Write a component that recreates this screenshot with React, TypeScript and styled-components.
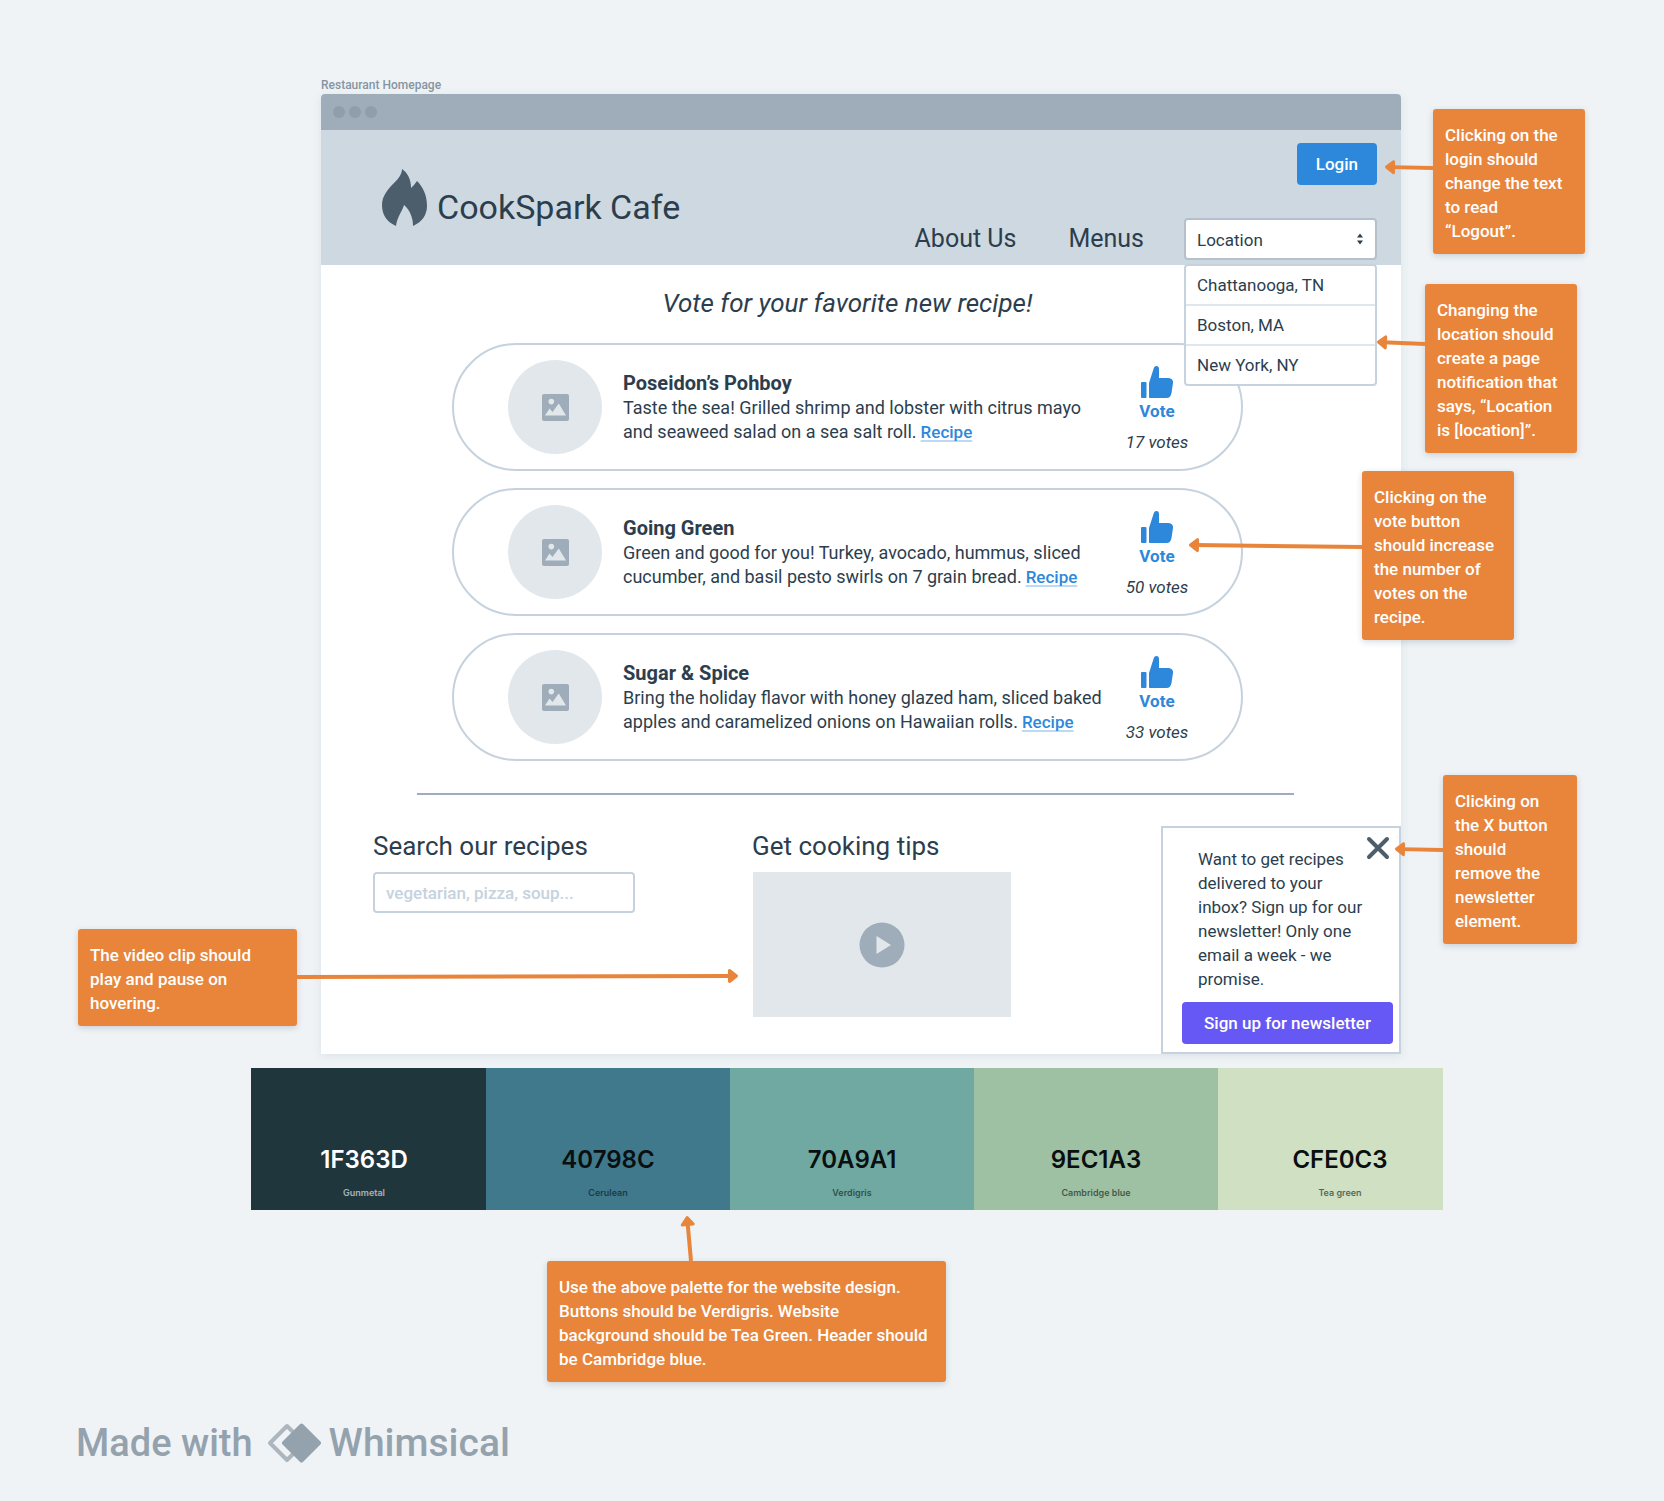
import React, { useState } from "react";
import styled, { createGlobalStyle, css } from "styled-components";

const ink = "#2c3e4d";
const slate = "#4c5d6b";
const steel = "#9eadb9";
const line = "#c6d2dd";
const blue = "#2d88db";
const orange = "#e8853b";

const GlobalStyle = createGlobalStyle`
  *, *::before, *::after { box-sizing: border-box; }
  body {
    margin: 0;
    background: #eff3f6;
    color: ${ink};
    font-family: Roboto, "Open Sans", sans-serif;
    font-size: 17px;
    line-height: 24px;
  }
  h1, h2, h3, p, ul { margin: 0; padding: 0; }
  ul { list-style: none; }
  button, input, select { font: inherit; color: inherit; }
  button { cursor: pointer; }
`;

const Board = styled.div`
  min-height: 100vh;
  padding: 77px 0 34px;
  overflow: hidden;
`;

const FrameArea = styled.div`
  margin: 0 263px 0 321px;
`;

const FrameLabel = styled.div`
  height: 17px;
  font-size: 12px;
  line-height: 17px;
  font-weight: 500;
  color: #8595a2;
`;

const Frame = styled.main`
  position: relative;
  background: #fff;
  border-radius: 4px 4px 0 0;
  box-shadow: 0 2px 10px rgba(60, 85, 110, 0.1);
`;

const TitleBar = styled.div`
  display: flex;
  align-items: center;
  gap: 4px;
  height: 36px;
  padding: 0 12px;
  background: ${steel};
  border-radius: 4px 4px 0 0;
`;

const Dot = styled.span`
  width: 12px;
  height: 12px;
  border-radius: 50%;
  background: #8e9eac;
`;

const Header = styled.header`
  display: flex;
  justify-content: space-between;
  height: 135px;
  padding: 13px 24px 5px 61px;
  background: #cdd8e1;
`;

const Brand = styled.div`
  display: flex;
  align-items: flex-start;
  gap: 10px;
  padding-top: 26px;
`;

const BrandName = styled.h1`
  padding-top: 18px;
  font-size: 34px;
  line-height: 40px;
  font-weight: 400;
`;

const HeaderSide = styled.div`
  display: flex;
  flex-direction: column;
  align-items: flex-end;
  justify-content: space-between;
`;

const SolidButton = styled.button<{ $fill: string }>`
  height: 42px;
  padding: 0 19px;
  border: 0;
  border-radius: 4px;
  background: ${(p) => p.$fill};
  color: #fff;
  font-weight: 500;
`;

const Nav = styled.nav`
  display: flex;
  align-items: center;
  gap: 40px;
`;

const NavLinks = styled.div`
  display: flex;
  gap: 52px;
`;

const NavLink = styled.a`
  font-size: 25px;
  line-height: 32px;
  color: inherit;
  text-decoration: none;
`;

const Picker = styled.div`
  position: relative;
  width: 193px;
`;

const PickerSelect = styled.select`
  display: block;
  width: 100%;
  height: 42px;
  padding: 2px 11px 0;
  appearance: none;
  background: #fff;
  border: 2px solid #b4c1cd;
  border-radius: 4px;
`;

const PickerArrows = styled.svg`
  position: absolute;
  top: 15px;
  right: 13px;
  pointer-events: none;
`;

const PickerMenu = styled.ul`
  position: absolute;
  z-index: 2;
  top: calc(100% + 4px);
  left: 0;
  right: 0;
  background: #fff;
  border: 2px solid ${line};
  border-radius: 4px;
`;

const PickerItem = styled.li`
  & + & { border-top: 2px solid #dfe6ee; }
`;

const PickerOption = styled.button`
  display: block;
  width: 100%;
  height: 38px;
  padding: 0 11px;
  border: 0;
  background: none;
  text-align: left;
`;

const Voting = styled.section`
  padding: 22px 158px 0 131px;
`;

const VotingTitle = styled.h2`
  margin-bottom: 24px;
  text-align: center;
  font-size: 26px;
  line-height: 32px;
  font-weight: 400;
  font-style: italic;
`;

const CardList = styled.ul`
  display: grid;
  gap: 17px;
`;

const Card = styled.li`
  display: flex;
  align-items: center;
  height: 128px;
  padding: 0 44px 0 54px;
  border: 2px solid ${line};
  border-radius: 64px;
`;

const Thumb = styled.div`
  display: grid;
  place-items: center;
  flex: none;
  width: 94px;
  height: 94px;
  margin-right: 21px;
  border-radius: 50%;
  background: #e2e7eb;
`;

const CardText = styled.div`
  flex: 1;
`;

const CardTitle = styled.h3`
  font-size: 20px;
  line-height: 26px;
  font-weight: 700;
`;

const CardLine = styled.span`
  display: flex;
  align-items: baseline;
  gap: 4px;
  font-size: 18px;
`;

const RecipeLink = styled.a`
  color: ${blue};
  font-size: 17px;
  font-weight: 500;
  text-decoration: underline;
  text-decoration-color: #bcdaf4;
  text-decoration-thickness: 2px;
  text-underline-offset: 2px;
  text-decoration-skip-ink: none;
`;

const VoteColumn = styled.div`
  display: flex;
  flex-direction: column;
  align-items: center;
  gap: 7px;
  width: 80px;
  padding-top: 6px;
`;

const VoteButton = styled.button`
  display: grid;
  justify-items: center;
  gap: 1px;
  padding: 0;
  border: 0;
  background: none;
  color: ${blue};
  font-weight: 700;
`;

const VoteCount = styled.span`
  font-style: italic;
`;

const Divider = styled.hr`
  height: 2px;
  margin: 32px 107px 0 96px;
  border: 0;
  background: ${steel};
`;

const Extras = styled.div`
  display: grid;
  grid-template-columns: 379fr 409fr 240px;
  padding: 31px 0 0 52px;
`;

const ExtraTitle = styled.h2`
  display: block;
  padding: 4px 0 10px;
  font-size: 26px;
  line-height: 32px;
  font-weight: 400;
`;

const SearchInput = styled.input`
  display: block;
  width: 262px;
  height: 41px;
  padding: 0 11px;
  background: #fff;
  border: 2px solid ${line};
  border-radius: 4px;
  &::placeholder { color: ${line}; opacity: 1; font-weight: 500; }
`;

const Video = styled.div`
  display: grid;
  place-items: center;
  width: 258px;
  height: 145px;
  margin-left: 1px;
  background: #e2e7eb;
`;

const PlayButton = styled.button`
  display: block;
  width: 46px;
  height: 46px;
  padding: 0;
  border: 0;
  background: none;
`;

const Newsletter = styled.aside`
  position: relative;
  display: flex;
  flex-direction: column;
  gap: 11px;
  padding: 19px 6px 8px 19px;
  border: 2px solid ${line};
  background: #fff;
`;

const NewsletterText = styled.p`
  padding-left: 16px;
  white-space: pre-line;
`;

const CloseButton = styled.button`
  position: absolute;
  top: 8px;
  right: 9px;
  width: 24px;
  height: 24px;
  padding: 0;
  border: 0;
  background: none;
`;

const PaletteArea = styled.section`
  margin: 14px 221px 0 251px;
`;

const Palette = styled.div`
  overflow: hidden;
`;

const Swatches = styled.ul`
  display: grid;
  grid-template-columns: repeat(5, 1fr);
  margin: 0 -19px 0 -9px;
`;

const Swatch = styled.li<{ $fill: string; $light?: boolean }>`
  display: flex;
  flex-direction: column;
  align-items: center;
  height: 142px;
  padding-top: 78px;
  background: ${(p) => p.$fill};
  color: ${(p) => (p.$light ? "#fff" : "#0a0f10")};
  font-family: Inter, sans-serif;
`;

const SwatchCode = styled.span`
  font-size: 24px;
  line-height: 28px;
  font-weight: 600;
`;

const SwatchName = styled.span`
  margin-top: 13px;
  font-size: 9px;
  line-height: 12px;
  font-weight: 600;
  opacity: 0.6;
`;

const noteBox = css`
  padding: 14px 10px 11px 12px;
  border-radius: 3px;
  background: ${orange};
  box-shadow: 0 2px 6px rgba(50, 70, 95, 0.2);
  color: #fff;
  font-weight: 500;
  white-space: pre-line;
`;

const PinnedNote = styled.div<{ $top: number; $x: string; $width: number }>`
  ${noteBox}
  position: absolute;
  z-index: 3;
  top: ${(p) => p.$top}px;
  left: ${(p) => p.$x};
  width: ${(p) => p.$width}px;
`;

const PaletteNote = styled.div`
  ${noteBox}
  position: relative;
  width: 399px;
  margin: 51px 0 0 296px;
`;

const ArrowSvg = styled.svg<{ $x: number; $y: number }>`
  position: absolute;
  left: ${(p) => p.$x}px;
  top: ${(p) => p.$y}px;
  overflow: visible;
  pointer-events: none;
`;

const Footer = styled.footer`
  display: flex;
  align-items: center;
  height: 48px;
  margin: 37px 0 0 76px;
  color: #94a2ad;
  font-size: 38px;
  line-height: 48px;
  font-weight: 500;
`;

const FooterLogo = styled.svg`
  margin: 0 8px 0 14px;
`;

const Wordmark = styled.span`
  font-size: 39px;
`;

/* An arrow from (x1, y1) to its tip (x2, y2), measured from the note's corner. */
function Arrow({ x1, y1, x2, y2 }: { x1: number; y1: number; x2: number; y2: number }) {
  const left = Math.min(x1, x2);
  const top = Math.min(y1, y2);
  const angle = (Math.atan2(y2 - y1, x2 - x1) * 180) / Math.PI;
  const w = Math.max(Math.abs(x2 - x1), 1);
  const h = Math.max(Math.abs(y2 - y1), 1);
  const back = 6 / Math.hypot(x2 - x1, y2 - y1);
  return (
    <ArrowSvg $x={left} $y={top} width={w} height={h} aria-hidden="true">
      <line
        x1={x1 - left}
        y1={y1 - top}
        x2={x2 - left - (x2 - x1) * back}
        y2={y2 - top - (y2 - y1) * back}
        stroke={orange}
        strokeWidth="4"
      />
      <path
        d="M-1.5 0L-8.5 -5.5V5.5Z"
        fill={orange}
        stroke={orange}
        strokeWidth="3"
        strokeLinejoin="round"
        transform={`translate(${x2 - left} ${y2 - top}) rotate(${angle})`}
      />
    </ArrowSvg>
  );
}

const Flame = () => (
  <svg width="45" height="57" viewBox="0 0 45 57" aria-hidden="true">
    <path
      fill={slate}
      d="M20 0C26 4 29 11 29 19C31 17 33 15 35 12C41 18 45 26 45 37C45 46 40 53 31 57C31 49 28 41 22 36C20 43 15 48 14 57C5 53 0 46 0 36C0 27 6 20 12 14C17 9 20 5 20 0Z"
    />
  </svg>
);

const PictureIcon = () => (
  <svg width="27" height="27" viewBox="0 0 27 27" aria-hidden="true">
    <rect width="27" height="27" rx="2" fill={steel} />
    <circle cx="9.3" cy="7.6" r="2.8" fill="#e2e7eb" />
    <path d="M3 21.500L7.500 14.500L10.500 18L16.800 9.500L24 21.500Z" fill="#e2e7eb" />
  </svg>
);

const ThumbUp = () => (
  <svg width="32" height="32" viewBox="0 0 32 32" aria-hidden="true">
    <rect x="0" y="16" width="5.500" height="16" rx="1" fill={blue} />
    <path
      fill={blue}
      d="M8 17L12.500 3C13 1 14 0 15.400 0C17 0 18 1.200 18 3V12H27C30.500 12 32.400 14 32 17L30.500 27C30 30 28.500 32 25.500 32H9C8.400 32 8 31.600 8 31Z"
    />
  </svg>
);

interface Recipe {
  title: string;
  first: string;
  second: string;
  votes: number;
}

const recipes: Recipe[] = [
  {
    title: "Poseidon’s Pohboy",
    first: "Taste the sea! Grilled shrimp and lobster with citrus mayo",
    second: "and seaweed salad on a sea salt roll.",
    votes: 17,
  },
  {
    title: "Going Green",
    first: "Green and good for you! Turkey, avocado, hummus, sliced",
    second: "cucumber, and basil pesto swirls on 7 grain bread.",
    votes: 50,
  },
  {
    title: "Sugar & Spice",
    first: "Bring the holiday flavor with honey glazed ham, sliced baked",
    second: "apples and caramelized onions on Hawaiian rolls.",
    votes: 33,
  },
];

const swatches = [
  { code: "1F363D", name: "Gunmetal", light: true },
  { code: "40798C", name: "Cerulean" },
  { code: "70A9A1", name: "Verdigris" },
  { code: "9EC1A3", name: "Cambridge blue" },
  { code: "CFE0C3", name: "Tea green" },
];

const places = ["Chattanooga, TN", "Boston, MA", "New York, NY"];

function RecipeCard({ recipe }: { recipe: Recipe }) {
  const [votes, setVotes] = useState(recipe.votes);
  return (
    <Card>
      <Thumb>
        <PictureIcon />
      </Thumb>
      <CardText>
        <CardTitle>{recipe.title}</CardTitle>
        <p>
          <CardLine>{recipe.first}</CardLine>
          <CardLine>
            <span>{recipe.second}</span>
            <RecipeLink href="#recipe">Recipe</RecipeLink>
          </CardLine>
        </p>
      </CardText>
      <VoteColumn>
        <VoteButton type="button" onClick={() => setVotes(votes + 1)}>
          <ThumbUp />
          Vote
        </VoteButton>
        <VoteCount>{votes} votes</VoteCount>
      </VoteColumn>
    </Card>
  );
}

export default function App() {
  const [place, setPlace] = useState("Location");
  const [newsletterOpen, setNewsletterOpen] = useState(true);
  return (
    <>
      <GlobalStyle />
      <Board>
        <FrameArea>
          <FrameLabel>Restaurant Homepage</FrameLabel>
          <Frame>
            <TitleBar>
              <Dot />
              <Dot />
              <Dot />
            </TitleBar>
            <Header>
              <Brand>
                <Flame />
                <BrandName>CookSpark Cafe</BrandName>
              </Brand>
              <HeaderSide>
                <SolidButton type="button" $fill={blue}>
                  Login
                </SolidButton>
                <Nav>
                  <NavLinks>
                    <NavLink href="#about">About Us</NavLink>
                    <NavLink href="#menus">Menus</NavLink>
                  </NavLinks>
                  <Picker>
                    <PickerSelect
                      aria-label="Location"
                      value={place}
                      onChange={(e) => setPlace(e.target.value)}
                    >
                      <option>Location</option>
                      {places.map((p) => (
                        <option key={p}>{p}</option>
                      ))}
                    </PickerSelect>
                    <PickerArrows width="8" height="12" viewBox="0 0 8 12" aria-hidden="true">
                      <path d="M4 0.500L7 4.500H1ZM4 11.500L1 7.500H7Z" fill={ink} />
                    </PickerArrows>
                    <PickerMenu>
                      {places.map((p) => (
                        <PickerItem key={p}>
                          <PickerOption type="button" onClick={() => setPlace(p)}>
                            {p}
                          </PickerOption>
                        </PickerItem>
                      ))}
                    </PickerMenu>
                  </Picker>
                </Nav>
              </HeaderSide>
            </Header>

            <Voting>
              <VotingTitle>Vote for your favorite new recipe!</VotingTitle>
              <CardList>
                {recipes.map((r) => (
                  <RecipeCard key={r.title} recipe={r} />
                ))}
              </CardList>
            </Voting>
            <Divider />

            <Extras>
              <section>
                <ExtraTitle as="label" htmlFor="search">
                  Search our recipes
                </ExtraTitle>
                <SearchInput id="search" type="text" placeholder="vegetarian, pizza, soup..." />
              </section>
              <section>
                <ExtraTitle>Get cooking tips</ExtraTitle>
                <Video>
                  <PlayButton type="button" aria-label="Play video">
                    <svg width="46" height="46" viewBox="0 0 46 46" aria-hidden="true">
                      <circle cx="23" cy="23" r="22.500" fill={steel} />
                      <path d="M17.500 14L32 23L17.500 32Z" fill="#e2e7eb" />
                    </svg>
                  </PlayButton>
                </Video>
              </section>
              {newsletterOpen && (
                <Newsletter>
                  <CloseButton
                    type="button"
                    aria-label="Close"
                    onClick={() => setNewsletterOpen(false)}
                  >
                    <svg width="24" height="24" viewBox="0 0 24 24" aria-hidden="true">
                      <path d="M3 3L21 21M21 3L3 21" stroke={slate} strokeWidth="4" strokeLinecap="round" />
                    </svg>
                  </CloseButton>
                  <NewsletterText>
                    {"Want to get recipes\ndelivered to your\ninbox? Sign up for our\nnewsletter! Only one\nemail a week - we\npromise."}
                  </NewsletterText>
                  <SolidButton type="button" $fill="#6558f5">
                    Sign up for newsletter
                  </SolidButton>
                </Newsletter>
              )}
            </Extras>

            <PinnedNote $top={15} $x="calc(100% + 32px)" $width={152}>
              {"Clicking on the\nlogin should\nchange the text\nto read\n“Logout”."}
              <Arrow x1={0} y1={59} x2={-48} y2={58} />
            </PinnedNote>
            <PinnedNote $top={190} $x="calc(100% + 24px)" $width={152}>
              {"Changing the\nlocation should\ncreate a page\nnotification that\nsays, “Location\nis [location]”."}
              <Arrow x1={0} y1={60} x2={-48} y2={58} />
            </PinnedNote>
            <PinnedNote $top={377} $x="calc(100% - 39px)" $width={152}>
              {"Clicking on the\nvote button\nshould increase\nthe number of\nvotes on the\nrecipe."}
              <Arrow x1={0} y1={76} x2={-173} y2={74} />
            </PinnedNote>
            <PinnedNote $top={681} $x="calc(100% + 42px)" $width={134}>
              {"Clicking on\nthe X button\nshould\nremove the\nnewsletter\nelement."}
              <Arrow x1={0} y1={75} x2={-48} y2={74} />
            </PinnedNote>
            <PinnedNote $top={835} $x="-243px" $width={219}>
              {"The video clip should\nplay and pause on\nhovering."}
              <Arrow x1={219} y1={48} x2={660} y2={47} />
            </PinnedNote>
          </Frame>
        </FrameArea>

        <PaletteArea>
          <Palette>
            <Swatches>
              {swatches.map((s) => (
                <Swatch key={s.code} $fill={`#${s.code}`} $light={s.light}>
                  <SwatchCode>{s.code}</SwatchCode>
                  <SwatchName>{s.name}</SwatchName>
                </Swatch>
              ))}
            </Swatches>
          </Palette>
          <PaletteNote>
            {"Use the above palette for the website design.\nButtons should be Verdigris. Website\nbackground should be Tea Green. Header should\nbe Cambridge blue."}
            <Arrow x1={144} y1={0} x2={140} y2={-45} />
          </PaletteNote>
        </PaletteArea>

        <Footer>
          Made with
          <FooterLogo width="54" height="40" viewBox="0 0 54 40" aria-hidden="true">
            <path
              d="M20 3L3 20L20 37L37 20Z"
              fill="none"
              stroke="#abb6bf"
              strokeWidth="4"
              strokeLinejoin="round"
            />
            <path
              d="M34.500 2.500L17 20L34.500 37.500L52 20Z"
              fill="#94a2ad"
              stroke="#94a2ad"
              strokeWidth="4"
              strokeLinejoin="round"
            />
          </FooterLogo>
          <Wordmark>Whimsical</Wordmark>
        </Footer>
      </Board>
    </>
  );
}
